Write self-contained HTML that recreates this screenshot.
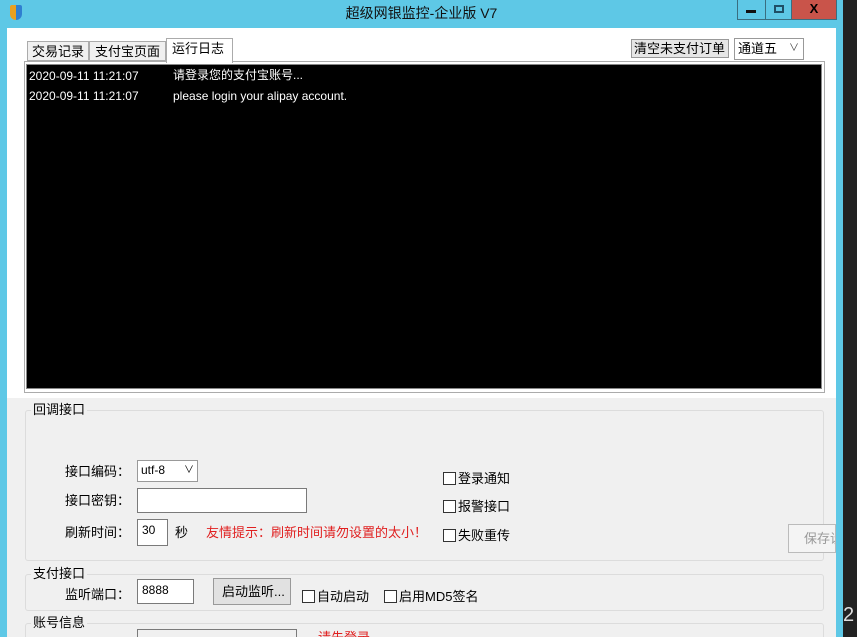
<!DOCTYPE html>
<html style="overflow:hidden;width:857px;height:637px"><head><meta charset="utf-8"><style>
*{margin:0;padding:0;box-sizing:border-box;line-height:1.5}
body{width:857px;height:637px;overflow:hidden;background:#222;font-family:"Liberation Sans","Noto Sans CJK SC",sans-serif;font-size:12px;color:#000;position:relative}
.a{position:absolute;white-space:nowrap}
.cb{position:absolute;width:13px;height:13px;border:1px solid #333;background:#fff}
.in{position:absolute;background:#fff;border:1px solid #7a7a7a}
.grp{position:absolute;border:1px solid #dcdcdc;border-radius:3px}
.lg{position:absolute;background:#f0f0f0;padding:0 2px;font-size:13px}
</style></head><body>
<div class="a" style="left:0;top:0;width:843px;height:637px;background:#5ec8e6"></div>
<div class="a" style="left:10px;top:5px;width:12px;height:15px;background:linear-gradient(90deg,#e8a020 50%,#2f7fd0 50%);border-radius:2px 2px 6px 6px"></div>
<div class="a" style="left:0;top:3px;width:843px;text-align:center;font-size:14px;color:#111">超级网银监控-企业版 V7</div>
<div class="a" style="left:737px;top:0;width:29px;height:20px;background:#5ec8e6;border:1px solid #3a6e80;border-top:none"></div>
<div class="a" style="left:746px;top:10px;width:10px;height:3px;background:#111"></div>
<div class="a" style="left:766px;top:0;width:26px;height:20px;background:#5ec8e6;border:1px solid #3a6e80;border-top:none;border-left:none"></div>
<div class="a" style="left:774px;top:5px;width:10px;height:8px;border:2px solid #1f4f66"></div>
<div class="a" style="left:792px;top:0;width:45px;height:20px;background:#c9544a;border:1px solid #3a6e80;border-top:none;border-left:none;text-align:center;font-weight:bold;font-size:13px;line-height:18px">X</div>
<div class="a" style="left:7px;top:28px;width:829px;height:609px;background:#f0f0f0"></div>
<div class="a" style="left:7px;top:28px;width:829px;height:370px;background:#fff"></div>
<div class="a" style="left:27px;top:41px;width:62px;height:20px;border:1px solid #ababab;background:#f0f0f0;font-size:13px;padding:0 4px">交易记录</div>
<div class="a" style="left:89px;top:41px;width:77px;height:20px;border:1px solid #ababab;background:#f0f0f0;font-size:13px;padding:0 5px">支付宝页面</div>
<div class="a" style="left:166px;top:38px;width:67px;height:25px;border:1px solid #ababab;border-bottom:none;background:#fff;font-size:13px;padding:0 5px;z-index:2">运行日志</div>
<div class="a" style="left:631px;top:39px;width:98px;height:19px;border:1px solid #999;background:#e6e6e6;font-size:13px;padding:0 2px;line-height:17px">清空未支付订单</div>
<div class="a" style="left:734px;top:38px;width:70px;height:22px;border:1px solid #999;background:#fff;font-size:13px;padding:0 3px">通道五<span style="position:absolute;right:4px;top:2px;font-size:10px;color:#444">∨</span></div>
<div class="a" style="left:24px;top:61px;width:801px;height:332px;border:1px solid #ababab;background:#fff"></div>
<div class="a" style="left:26px;top:64px;width:796px;height:325px;background:#000;border:1px solid #888"></div>
<div class="a" style="left:29px;top:67px;color:#fff;font-size:12px">2020-09-11 11:21:07</div>
<div class="a" style="left:173px;top:66px;color:#fff;font-size:12px">请登录您的支付宝账号...</div>
<div class="a" style="left:29px;top:87px;color:#fff;font-size:12px">2020-09-11 11:21:07</div>
<div class="a" style="left:173px;top:87px;color:#fff;font-size:12px">please login your alipay account.</div>
<div class="grp" style="left:25px;top:410px;width:799px;height:151px"></div>
<div class="lg" style="left:31px;top:400px">回调接口</div>
<div class="a" style="left:65px;top:462px;font-size:13px">接口编码：</div>
<div class="in" style="left:137px;top:460px;width:61px;height:22px;padding:0 3px;border-color:#999">utf-8<span style="position:absolute;right:3px;top:2px;font-size:10px">∨</span></div>
<div class="a" style="left:65px;top:491px;font-size:13px">接口密钥：</div>
<div class="in" style="left:137px;top:488px;width:170px;height:25px"></div>
<div class="a" style="left:65px;top:523px;font-size:13px">刷新时间：</div>
<div class="in" style="left:137px;top:519px;width:31px;height:27px;padding:1px 4px">30</div>
<div class="a" style="left:175px;top:523px;font-size:13px">秒</div>
<div class="a" style="left:206px;top:523px;font-size:13px;color:#e02020">友情提示：刷新时间请勿设置的太小！</div>
<div class="cb" style="left:443px;top:472px"></div><div class="a" style="left:458px;top:469px;font-size:13px">登录通知</div>
<div class="cb" style="left:443px;top:500px"></div><div class="a" style="left:458px;top:497px;font-size:13px">报警接口</div>
<div class="cb" style="left:443px;top:529px"></div><div class="a" style="left:458px;top:526px;font-size:13px">失败重传</div>
<div class="a" style="left:788px;top:524px;width:48px;height:29px;border:1px solid #bbb;background:#f4f4f4;color:#999;font-size:13px;padding:4px 0 0 15px;overflow:hidden">保存设</div>
<div class="grp" style="left:25px;top:574px;width:799px;height:37px"></div>
<div class="lg" style="left:31px;top:564px">支付接口</div>
<div class="a" style="left:65px;top:585px;font-size:13px">监听端口：</div>
<div class="in" style="left:137px;top:579px;width:57px;height:25px;padding:1px 4px">8888</div>
<div class="a" style="left:213px;top:578px;width:78px;height:27px;border:1px solid #999;background:#e1e1e1;font-size:13px;padding:3px 0 0 8px">启动监听...</div>
<div class="cb" style="left:302px;top:590px"></div><div class="a" style="left:317px;top:587px;font-size:13px">自动启动</div>
<div class="cb" style="left:384px;top:590px"></div><div class="a" style="left:399px;top:587px;font-size:13px">启用MD5签名</div>
<div class="grp" style="left:25px;top:623px;width:799px;height:20px"></div>
<div class="lg" style="left:31px;top:613px">账号信息</div>
<div class="in" style="left:137px;top:629px;width:160px;height:20px;background:#f0f0f0"></div>
<div class="a" style="left:318px;top:628px;font-size:13px;color:#e02020">请先登录...</div>
<div class="a" style="left:843px;top:600px;color:#ddd;font-size:20px">2</div>
</body></html>
